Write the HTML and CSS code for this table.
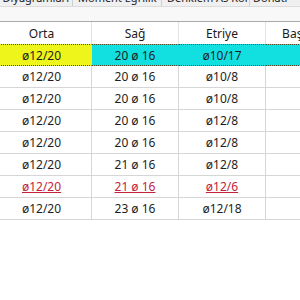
FILE: index.html
```html
<!DOCTYPE html>
<html lang="tr">
<head>
<meta charset="utf-8">
<link rel="stylesheet" href="styles.css">
</head>
<body>
<div class="tabs">
  <div class="tab tab1">Diyagramları</div>
  <div class="tab tab2">Moment Eğrilik</div>
  <div class="tab tab3">Denklem As Kontrolü</div>
  <div class="tab tab4">Donatı</div>
</div>
<div class="band"></div>
<div class="grid">
  <div class="hd">Orta</div><div class="hd">Sağ</div><div class="hd">Etriye</div><div class="hd">Başlangıç</div>

  <div class="c sel-y">ø12/20</div><div class="c sel-c">20 ø 16</div><div class="c sel-c">ø10/17</div><div class="c sel-c"></div>

  <div class="c">ø12/20</div><div class="c">20 ø 16</div><div class="c">ø10/8</div><div class="c"></div>
  <div class="c">ø12/20</div><div class="c">20 ø 16</div><div class="c">ø10/8</div><div class="c"></div>
  <div class="c">ø12/20</div><div class="c">20 ø 16</div><div class="c">ø12/8</div><div class="c"></div>
  <div class="c">ø12/20</div><div class="c">20 ø 16</div><div class="c">ø12/8</div><div class="c"></div>
  <div class="c">ø12/20</div><div class="c">21 ø 16</div><div class="c">ø12/8</div><div class="c"></div>
  <div class="c err">ø12/20</div><div class="c err">21 ø 16</div><div class="c err">ø12/6</div><div class="c"></div>
  <div class="c">ø12/20</div><div class="c">23 ø 16</div><div class="c">ø12/18</div><div class="c"></div>
</div>
</body>
</html>
```

FILE: styles.css
```css
html, body {
  margin: 0;
  padding: 0;
  background: #ffffff;
  overflow: hidden;
  width: 300px;
  height: 300px;
}

body {
  font-family: "Noto Sans", "DejaVu Sans", sans-serif;
  font-size: 12px;
  color: #1e1e1e;
}

.tabs {
  display: flex;
  height: 6px;
  overflow: hidden;
  background: #f0f0f0;
  border-bottom: 1px solid #dcdcdc;
}

.tab {
  flex: none;
  box-sizing: border-box;
  height: 20px;
  margin-top: -9px;
  line-height: 14px;
  font-size: 11px;
  white-space: nowrap;
  overflow: hidden;
  color: #222;
  border-right: 1px solid #cfcfcf;
  padding-left: 5px;
}

.tab1 {
  width: 73px;
  padding-left: 0;
  padding-right: 3px;
  text-align: right;
  direction: rtl;
}

.tab2 { width: 89px; }
.tab3 { width: 88px; }
.tab4 { width: 60px; padding-left: 3px; border-right: none; }

.band {
  height: 14px;
  background: #f8f8f8;
  border-bottom: 1px solid #a9a9a9;
}

.grid {
  display: grid;
  grid-template-columns: 100px 87px 87px 87px;
  grid-auto-rows: 22px;
  margin-left: -8px;
  width: 361px;
}

.hd, .c {
  box-sizing: border-box;
  display: flex;
  align-items: center;
  justify-content: center;
  white-space: nowrap;
  border-right: 1px solid #d6d6d6;
}

.hd {
  color: #1a1a1a;
  border-right-color: #e3e3e3;
}

.c {
  border-bottom: 1px solid #d6d6d6;
}

.sel-y, .sel-c {
  border-top: 1px dotted #4a4a2a;
  border-bottom: 1px dotted #4a4a2a;
}

.sel-y {
  background: #eef51a;
  border-right-color: #eef51a;
}

.sel-c {
  background: #12e0e0;
  border-right-color: #12e0e0;
}

.err {
  color: #c4223a;
  text-decoration: underline;
}
```
